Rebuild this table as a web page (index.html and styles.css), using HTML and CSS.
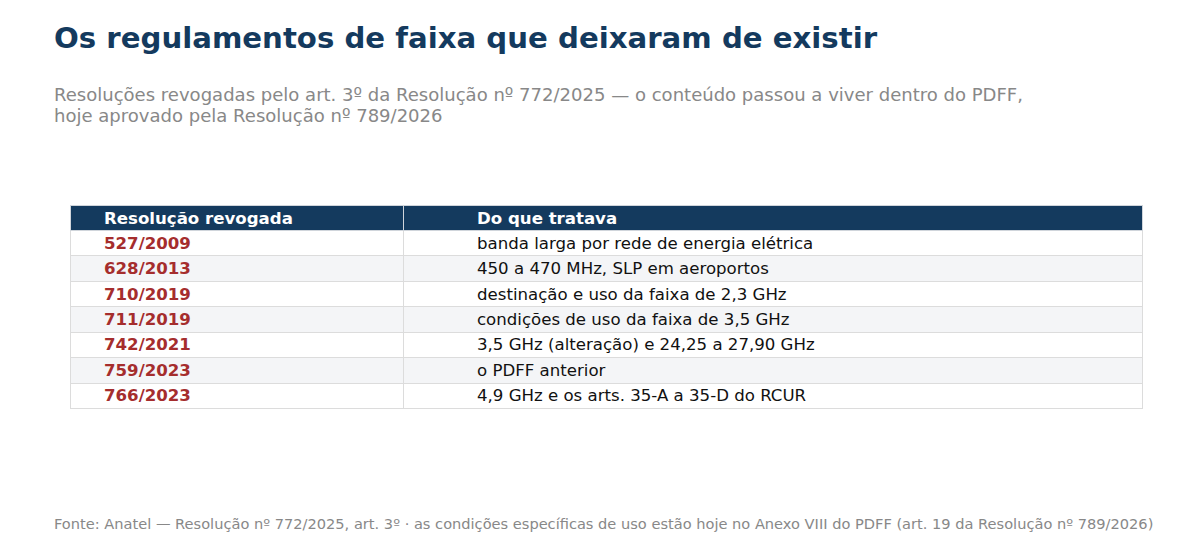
FILE: index.html
```html
<!DOCTYPE html>
<html lang="pt">
<head>
<meta charset="utf-8">
<link rel="stylesheet" href="styles.css">
</head>
<body>
<div class="page">
  <h1 class="title">Os regulamentos de faixa que deixaram de existir</h1>
  <p class="subtitle">Resoluções revogadas pelo art. 3º da Resolução nº 772/2025 — o conteúdo passou a viver dentro do PDFF,<br>hoje aprovado pela Resolução nº 789/2026</p>
  <div class="table-wrap">
    <table class="regs">
      <thead>
        <tr><th class="c1">Resolução revogada</th><th class="c2">Do que tratava</th></tr>
      </thead>
      <tbody>
        <tr><td class="c1 num">527/2009</td><td class="c2">banda larga por rede de energia elétrica</td></tr>
        <tr class="alt"><td class="c1 num">628/2013</td><td class="c2">450 a 470 MHz, SLP em aeroportos</td></tr>
        <tr><td class="c1 num">710/2019</td><td class="c2">destinação e uso da faixa de 2,3 GHz</td></tr>
        <tr class="alt"><td class="c1 num">711/2019</td><td class="c2">condições de uso da faixa de 3,5 GHz</td></tr>
        <tr><td class="c1 num">742/2021</td><td class="c2">3,5 GHz (alteração) e 24,25 a 27,90 GHz</td></tr>
        <tr class="alt"><td class="c1 num">759/2023</td><td class="c2">o PDFF anterior</td></tr>
        <tr><td class="c1 num">766/2023</td><td class="c2">4,9 GHz e os arts. 35-A a 35-D do RCUR</td></tr>
      </tbody>
    </table>
  </div>
  <p class="source">Fonte: Anatel — Resolução nº 772/2025, art. 3º · as condições específicas de uso estão hoje no Anexo VIII do PDFF (art. 19 da Resolução nº 789/2026)</p>
</div>
</body>
</html>
```

FILE: styles.css
```css
* { box-sizing: border-box; }
html, body { margin: 0; padding: 0; background: #ffffff; }
.page {
  width: 1200px;
  height: 554px;
  padding: 21px 0 0 54px;
  display: flex;
  flex-direction: column;
}
.title {
  margin: 0;
  font-family: "DejaVu Sans", sans-serif;
  font-weight: bold;
  font-size: 29.2px;
  line-height: 34px;
  color: #143a5e;
}
.subtitle {
  margin: 29px 0 0 0;
  font-family: "DejaVu Sans", sans-serif;
  font-size: 18.05px;
  line-height: 21px;
  color: #888888;
}
.table-wrap {
  margin: 79px 0 0 16px;
  width: 1073px;
}
.regs {
  width: 100%;
  border-collapse: collapse;
  table-layout: fixed;
  font-family: "DejaVu Sans", sans-serif;
  font-size: 16.6px;
}
.regs th, .regs td {
  border: 1px solid #dcdcdc;
  padding: 0;
  text-align: left;
  vertical-align: middle;
  white-space: nowrap;
}
.regs th {
  background: #143a5e;
  color: #ffffff;
  height: 25px;
  font-weight: bold;
  border-color: #d0d5db;
}
.regs td { height: 25.43px; color: #111111; }
.regs .c1 { width: 333px; padding-left: 33px; }
.regs .c2 { padding-left: 73px; }
.regs td.num {
  font-weight: bold;
  color: #a52d2d;
}
.regs tr.alt td { background: #f4f5f7; }
.source {
  margin: 106px 0 0 0;
  font-family: "DejaVu Sans", sans-serif;
  font-size: 14.6px;
  line-height: 18px;
  color: #888888;
  white-space: nowrap;
}
```
